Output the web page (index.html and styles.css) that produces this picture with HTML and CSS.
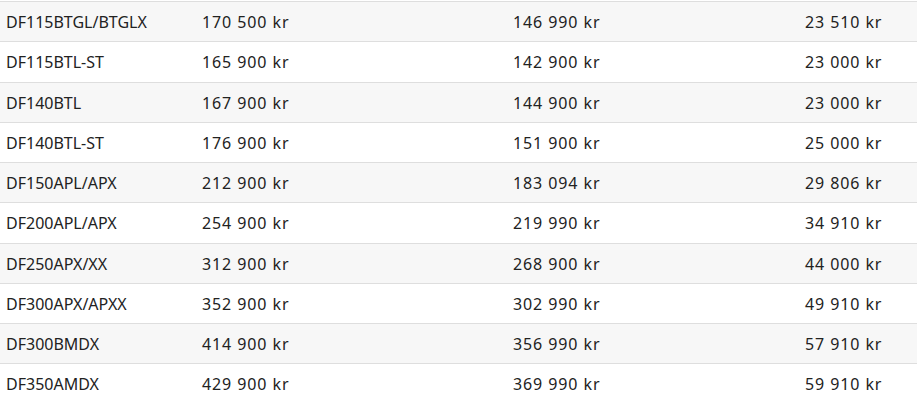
FILE: index.html
```html
<!DOCTYPE html>
<html lang="no">
<head>
<meta charset="utf-8">
<title>Priser</title>
<link rel="stylesheet" href="styles.css">
</head>
<body>
<div class="table">
  <div class="row"><div class="cell name">DF115BTGL/BTGLX</div><div class="cell num">170 500 kr</div><div class="cell num">146 990 kr</div><div class="cell num">23 510 kr</div></div>
  <div class="row"><div class="cell name">DF115BTL-ST</div><div class="cell num">165 900 kr</div><div class="cell num">142 900 kr</div><div class="cell num">23 000 kr</div></div>
  <div class="row"><div class="cell name">DF140BTL</div><div class="cell num">167 900 kr</div><div class="cell num">144 900 kr</div><div class="cell num">23 000 kr</div></div>
  <div class="row"><div class="cell name">DF140BTL-ST</div><div class="cell num">176 900 kr</div><div class="cell num">151 900 kr</div><div class="cell num">25 000 kr</div></div>
  <div class="row"><div class="cell name">DF150APL/APX</div><div class="cell num">212 900 kr</div><div class="cell num">183 094 kr</div><div class="cell num">29 806 kr</div></div>
  <div class="row"><div class="cell name">DF200APL/APX</div><div class="cell num">254 900 kr</div><div class="cell num">219 990 kr</div><div class="cell num">34 910 kr</div></div>
  <div class="row"><div class="cell name">DF250APX/XX</div><div class="cell num">312 900 kr</div><div class="cell num">268 900 kr</div><div class="cell num">44 000 kr</div></div>
  <div class="row"><div class="cell name">DF300APX/APXX</div><div class="cell num">352 900 kr</div><div class="cell num">302 990 kr</div><div class="cell num">49 910 kr</div></div>
  <div class="row"><div class="cell name">DF300BMDX</div><div class="cell num">414 900 kr</div><div class="cell num">356 990 kr</div><div class="cell num">57 910 kr</div></div>
  <div class="row"><div class="cell name">DF350AMDX</div><div class="cell num">429 900 kr</div><div class="cell num">369 990 kr</div><div class="cell num">59 910 kr</div></div>
</div>
</body>
</html>
```

FILE: styles.css
```css
html, body {
  margin: 0;
  padding: 0;
  background: #ffffff;
}
body {
  font-family: "Noto Sans", "DejaVu Sans", sans-serif;
  font-size: 16px;
  color: #222222;
  padding-top: 1px;
}
.table {
  display: flex;
  flex-direction: column;
}
.row {
  display: grid;
  grid-template-columns: 196px 311px 292px 1fr;
  height: 39.25px;
  border-top: 1px solid #dedede;
  align-items: center;
}
.row:nth-child(odd) {
  background: #f7f7f7;
}
.cell {
  padding-left: 6px;
  padding-top: 1px;
  white-space: nowrap;
}
.num {
  letter-spacing: 0.9px;
}
```
